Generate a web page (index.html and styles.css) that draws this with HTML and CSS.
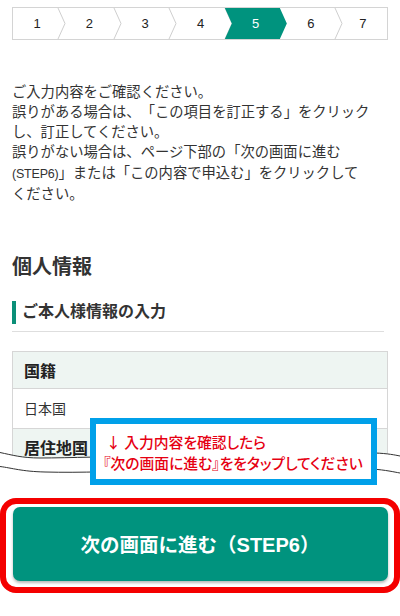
FILE: index.html
```html
<!DOCTYPE html>
<html lang="ja">
<head>
<meta charset="utf-8">
<title>確認画面</title>
<link rel="stylesheet" href="styles.css">
</head>
<body>
<div class="page">
  <nav class="steps">
    <div class="step"><span class="num">1</span><svg class="chev" viewBox="0 0 7 31" preserveAspectRatio="none"><polyline points="0,0 7,15.5 0,31"/></svg></div>
    <div class="step"><span class="num">2</span><svg class="chev" viewBox="0 0 7 31" preserveAspectRatio="none"><polyline points="0,0 7,15.5 0,31"/></svg></div>
    <div class="step"><span class="num">3</span><svg class="chev" viewBox="0 0 7 31" preserveAspectRatio="none"><polyline points="0,0 7,15.5 0,31"/></svg></div>
    <div class="step"><span class="num">4</span><svg class="chev" viewBox="0 0 7 31" preserveAspectRatio="none"><polyline points="0,0 7,15.5 0,31"/></svg></div>
    <div class="step active"><span class="num">5</span></div>
    <div class="step"><span class="num">6</span><svg class="chev" viewBox="0 0 7 31" preserveAspectRatio="none"><polyline points="0,0 7,15.5 0,31"/></svg></div>
    <div class="step"><span class="num">7</span></div>
  </nav>

  <p class="intro">ご入力内容をご確認ください。<br>誤りがある場合は、「この項目を訂正する」をクリックし、訂正してください。<br>誤りがない場合は、ページ下部の「次の画面に進む<span class="latin">(STEP6)</span>」または「この内容で申込む」をクリックして<span class="keep">ください。</span></p>

  <h2 class="section-title">個人情報</h2>

  <h3 class="subhead"><span class="subhead-bar">ご本人様情報の入力</span></h3>

  <div class="cut">
    <table class="info">
      <tr><th>国籍</th></tr>
      <tr><td>日本国</td></tr>
      <tr><th>居住地国</th></tr>
    </table>
  </div>
</div>

<svg class="wave" viewBox="0 0 400 32" preserveAspectRatio="none">
  <path class="wave-fill" d="M0,5.5 C12,8 22,11 40,11 C70,11 110,9 150,10 C200,11 250,11 290,9 C330,7 355,5 375,6 C388,6.5 395,8 400,9 L400,32 L0,32 Z"/>
  <path class="wave-line" d="M0,5.5 C12,8 22,11 40,11 C70,11 110,9 150,10 C200,11 250,11 290,9 C330,7 355,5 375,6 C388,6.5 395,8 400,9"/>
  <path class="wave-line" d="M0,19.5 C12,21 22,24.5 45,25 C80,26 120,24 160,24 C210,24 260,25 300,24 C335,23 355,21 372,22 C386,23 394,25 400,26"/>
</svg>

<div class="highlight">
  <button class="next" type="button">次の画面に進む（<span class="btn-latin">STEP6</span>）</button>
</div>

<div class="callout">
  <p class="callout-line"><span class="arrow">↓</span> 入力内容を確認したら</p>
  <p class="callout-line">『次の画面に進む』ををタップしてください</p>
</div>
</body>
</html>
```

FILE: styles.css
```css
* {
  box-sizing: border-box;
}

html, body {
  margin: 0;
  padding: 0;
  background: #ffffff;
}

body {
  width: 400px;
  font-family: "Liberation Sans", "Noto Sans CJK JP", sans-serif;
  color: #333333;
  overflow: hidden;
  text-spacing-trim: space-all;
}

.page {
  padding: 0 12px;
}

/* stepper */
.steps {
  margin-top: 7px;
  height: 33px;
  border: 1px solid #d4d4d4;
  display: grid;
  grid-template-columns: 48.5fr 56.5fr 55.5fr 56fr 55fr 56fr 48.5fr;
}

.step {
  position: relative;
  display: flex;
  align-items: center;
  justify-content: center;
  font-family: "Liberation Sans", sans-serif;
  font-size: 13px;
  color: #222222;
}

.num {
  position: relative;
  z-index: 2;
}

.chev {
  position: absolute;
  top: 0;
  right: -3.5px;
  width: 7px;
  height: 100%;
  overflow: visible;
}

.chev polyline {
  fill: none;
  stroke: #cfcfcf;
  stroke-width: 1;
}

.step.active {
  color: #ffffff;
}

.step.active::before {
  content: "";
  position: absolute;
  top: 0;
  bottom: 0;
  left: -3.5px;
  right: -3.8px;
  background: #00937e;
  z-index: 1;
  clip-path: polygon(0 0, calc(100% - 7px) 0, 100% 50%, calc(100% - 7px) 100%, 0 100%, 7px 50%);
}

/* intro text */
.intro {
  margin: 41.5px 10px 0 0;
  font-size: 14.3px;
  line-height: 20.3px;
  color: #333333;
}

.latin {
  font-size: 12.5px;
  letter-spacing: -0.2px;
}

.keep {
  white-space: nowrap;
}

.section-title {
  margin: 49px 0 0;
  font-size: 20px;
  line-height: 28px;
  font-weight: 700;
  color: #333333;
}

.subhead {
  margin: 20px 4px 0 0;
  padding-bottom: 7px;
  border-bottom: 1px solid #dedede;
  font-size: 16px;
  font-weight: 700;
  line-height: 22.6px;
}

.subhead-bar {
  display: block;
  border-left: 4px solid #0b8f78;
  padding-left: 6px;
}

/* table */
.cut {
  margin-top: 19px;
  height: 108px;
  overflow: hidden;
}

.info {
  width: 100%;
  border-collapse: collapse;
  border: 1px solid #d6d6d6;
}

.info th,
.info td {
  border: 1px solid #d6d6d6;
  text-align: left;
  padding: 0 11px;
}

.info th {
  height: 37px;
  background: #eef5f2;
  font-size: 16px;
  font-weight: 700;
  color: #222222;
}

.info td {
  height: 40px;
  font-size: 14px;
  color: #333333;
}

/* torn edge */
.wave {
  display: block;
  position: relative;
  width: 400px;
  height: 32px;
  margin-top: -12px;
}

.wave-fill {
  fill: #ffffff;
}

.wave-line {
  fill: none;
  stroke: #333333;
  stroke-width: 1;
}

/* highlighted button */
.highlight {
  margin-top: 19px;
  width: 400px;
  height: 95px;
  border: 6px solid #f40000;
  border-radius: 16px;
  padding: 3px 6.5px 6px;
}

.next {
  display: block;
  width: 100%;
  height: 74px;
  border: none;
  border-radius: 7px;
  background: #00937e;
  box-shadow: 0 2px 3px rgba(0, 0, 0, 0.28);
  color: #ffffff;
  font-family: "Liberation Sans", "Noto Sans CJK JP", sans-serif;
  font-size: 19.5px;
  font-weight: 700;
  padding: 0;
  text-spacing-trim: space-all;
}

.btn-latin {
  font-size: 20px;
}

/* annotation overlay */
.callout {
  position: absolute;
  top: 418px;
  left: 90px;
  width: 287px;
  height: 67px;
  border: 6px solid #00a0e9;
  background: #ffffff;
  padding: 7px 0 0 7px;
  font-family: "Noto Sans CJK JP", sans-serif;
  font-feature-settings: "palt";
  font-size: 14.8px;
  font-weight: 500;
  line-height: 21.3px;
  color: #e60012;
}

.callout-line {
  margin: 0;
  white-space: nowrap;
}

.arrow {
  display: inline-block;
  margin-left: 3px;
}
```
